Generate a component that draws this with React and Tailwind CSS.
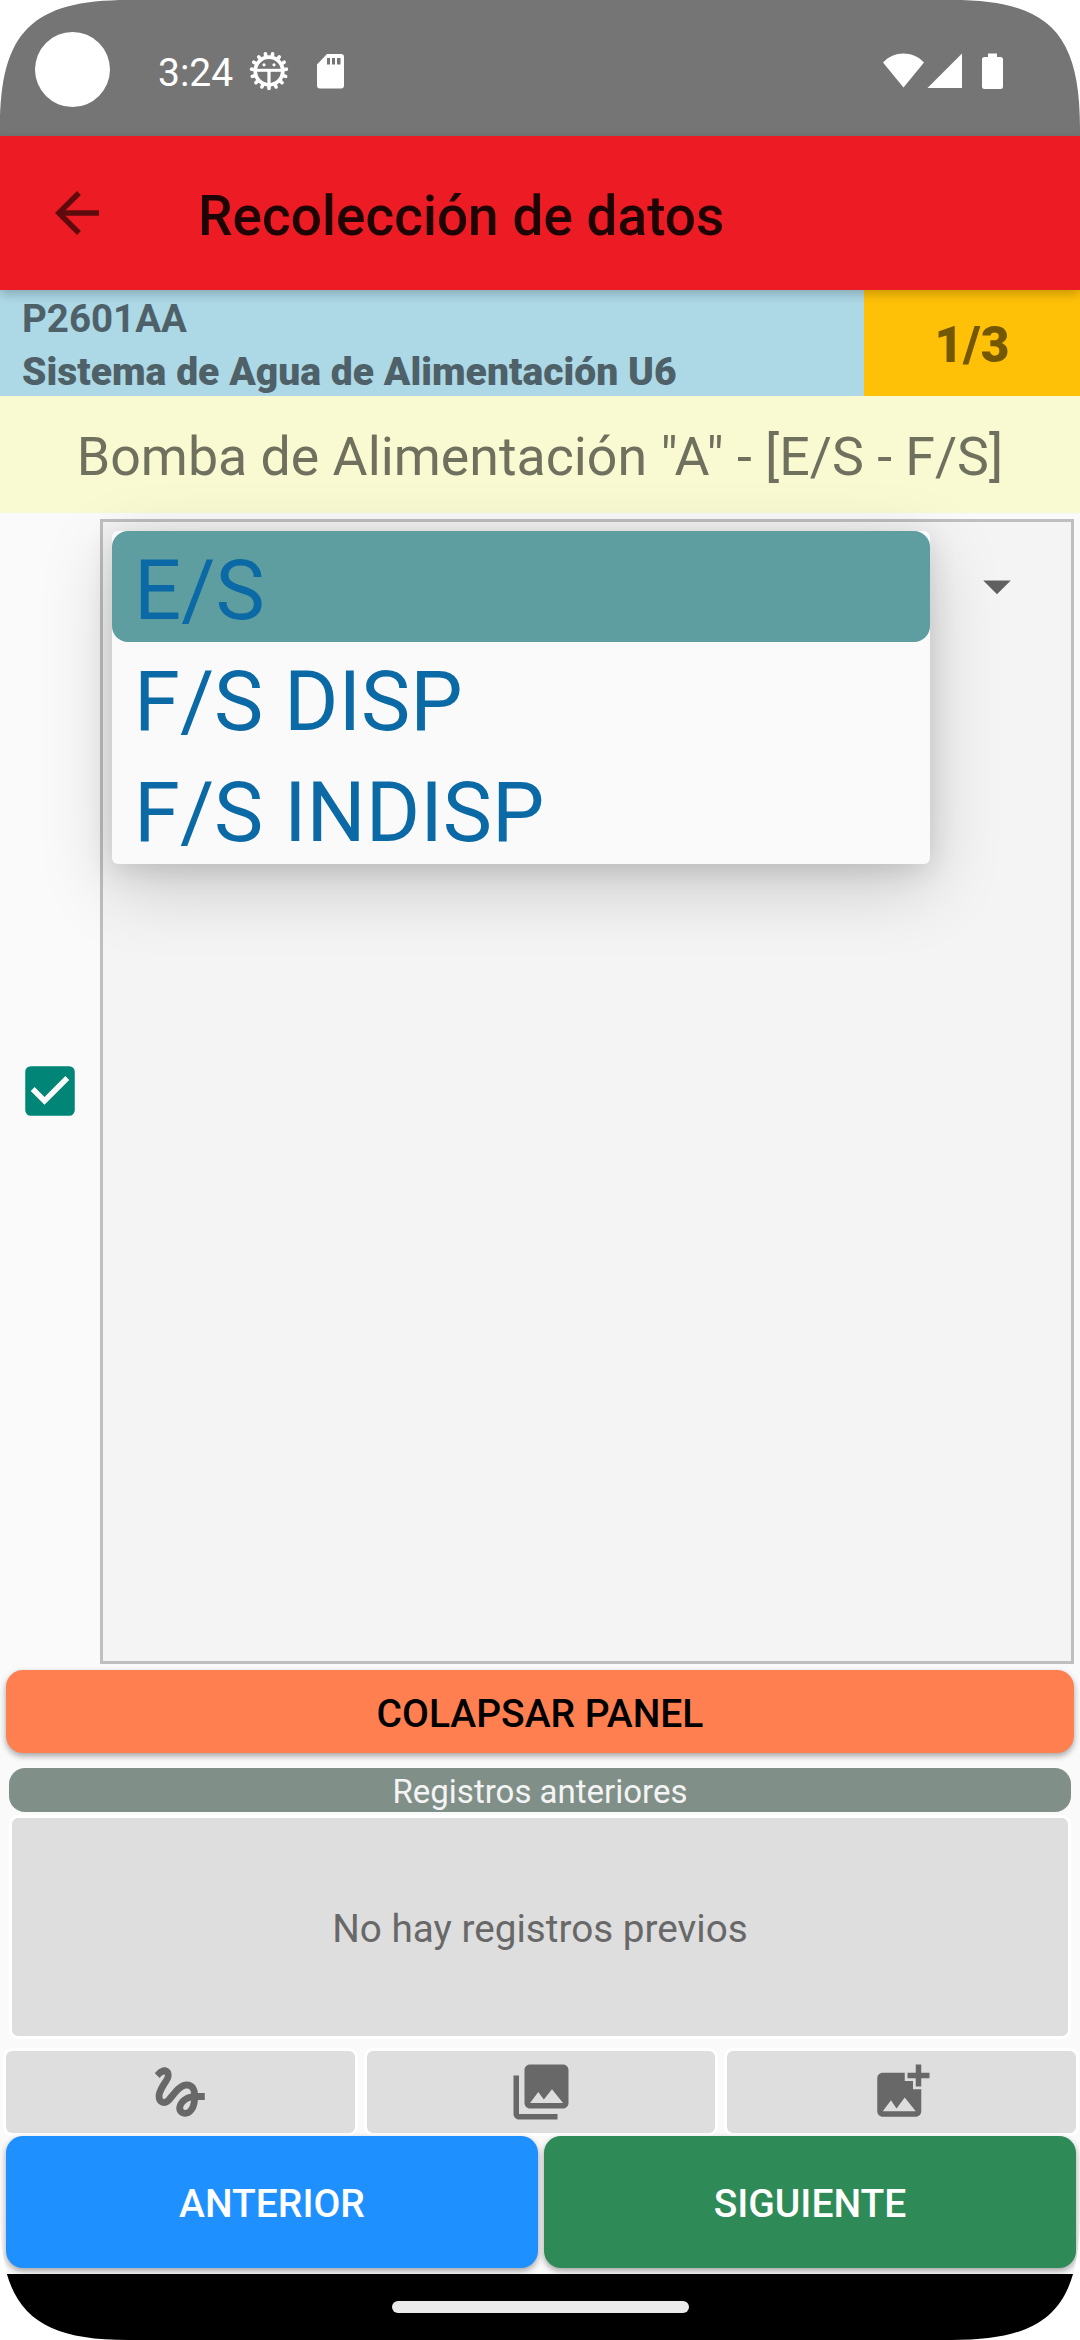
import { MdArrowBack, MdArrowDropDown, MdCheckBox, MdGesture, MdCollections, MdAddPhotoAlternate } from "react-icons/md";

const options = ["E/S", "F/S DISP", "F/S INDISP"];

const teeth = Array.from({ length: 15 }, (_, i) => i * 24 + 12);

function DebugGear() {
  return (
    <svg className="ml-[17px] h-[40px] w-[40px]" viewBox="0 0 40 40" fill="none" stroke="#fff">
      <circle cx="20" cy="20" r="13.8" strokeWidth="3.800" />
      {teeth.map((a) => (
        <line key={a} x1="20" y1="5.500" x2="20" y2="2.500" strokeWidth="3.600" strokeLinecap="round" transform={`rotate(${a} 20 20)`} />
      ))}
      <path d="M7 19.300h26" strokeWidth="3" />
      <path d="M20 19v14" strokeWidth="3.200" />
      <circle cx="15" cy="13.800" r="1.600" fill="#fff" stroke="none" />
      <circle cx="25" cy="13.800" r="1.600" fill="#fff" stroke="none" />
    </svg>
  );
}

function StatusBar() {
  return (
    <div className="flex h-[136px] shrink-0 items-start bg-[#757575] pl-[35px]">
      <div className="mt-[32px] h-[75px] w-[75px] rounded-full bg-white" />
      <span className="mt-[50px] ml-[48px] w-[74px] text-[39px] leading-[46px] whitespace-nowrap text-white">3:24</span>
      <div className="mt-[51px]">
        <DebugGear />
      </div>
      <svg className="mt-[54px] ml-[28px] h-[35px] w-[27px]" viewBox="0 0 27 35">
        <path fillRule="evenodd" fill="#fff" d="M10 0H24a3 3 0 0 1 3 3V31.500a3 3 0 0 1-3 3H3a3 3 0 0 1-3-3V10.500zM10 4v6.500h3V4zm5 0v6.500h3V4zm5 0v6.500h3.500V4z" />
      </svg>
      <svg className="mt-[53px] ml-[539px] h-[36px] w-[121px]" viewBox="0 0 121 36" fill="#fff">
        <path d="M0 9.500C11 -2.500 30 -2.500 41 9.500L20.500 34.500z" />
        <path d="M44.500 35L79 .5V35z" />
        <path d="M105 .5h9V4h3.500a2.500 2.500 0 0 1 2.500 2.500V33.500a2.500 2.500 0 0 1-2.500 2.500h-16a2.500 2.500 0 0 1-2.500-2.500V6.500A2.500 2.500 0 0 1 101.500 4h3.500z" />
      </svg>
    </div>
  );
}

function ToolButton({ children }) {
  return (
    <div className="flex h-[88px] flex-1 items-center justify-center rounded-[9px] border-[3px] border-white bg-[#dedede] text-[66px] text-[#686868]">
      {children}
    </div>
  );
}

function Corner({ className }) {
  return (
    <svg className={className} width="128" height="128" viewBox="0 0 128 128">
      <path d="M0 0V128C0 32 32 0 128 0z" fill="#fff" />
    </svg>
  );
}

export default function App() {
  return (
    <div className="relative flex h-[2340px] w-[1080px] flex-col overflow-hidden bg-[#fafafa] font-['Roboto',sans-serif]">
      <StatusBar />
      <header className="relative z-10 flex h-[154px] shrink-0 items-center bg-[#ed1c24] pl-[44px] shadow-[0_4px_10px_rgba(0,0,0,0.22)]">
        <MdArrowBack className="text-[66px] text-[#5f0b0e]" />
        <h1 className="ml-[88px] pt-[6px] text-[55px] leading-[64px] font-medium text-[#1f0405]">Recolección de datos</h1>
      </header>
      <div className="flex h-[106px] shrink-0">
        <div className="w-[864px] bg-[#add8e6] pt-[2px] pl-[22px] text-[39px] leading-[53px] whitespace-nowrap text-[#4e6168]">
          <p className="text-[38.5px] font-bold">P2601AA</p>
          <p className="pt-px font-black tracking-[0.04px]">Sistema de Agua de Alimentación U6</p>
        </div>
        <div className="flex flex-1 items-center justify-center bg-[#ffc107] pt-[4px] text-[49.5px] font-black text-[#735703]">1/3</div>
      </div>
      <div className="flex h-[117px] shrink-0 items-center justify-center bg-[#f9fad2] pt-[5px] text-[53.7px] whitespace-nowrap text-[#70705f]">
        Bomba de Alimentación "A" - [E/S - F/S]
      </div>
      <main className="flex h-[1157px] shrink-0 py-[6px] pr-[6px]">
        <div className="flex w-[100px] items-center justify-center pb-[2px] text-[66px] text-[#008577]">
          <MdCheckBox />
        </div>
        <div className="relative flex-1 border-[3px] border-[#bfbfbf] bg-[#f4f4f4]">
          <div className="flex justify-end pt-[31px] pr-[41px] text-[66px] text-[#616161]">
            <MdArrowDropDown />
          </div>
          <ul className="absolute top-[9px] left-[9px] w-[818px] rounded-[6px] bg-[#fafafa] text-[83px] text-[#0b6aa5] shadow-[0_22px_72px_rgba(0,0,0,0.18),0_6px_28px_rgba(0,0,0,0.11)]">
            {options.map((o, i) => (
              <li key={o} className={i === 0 ? "flex h-[111px] items-center rounded-[16px] bg-[#5f9ea0] pt-[10px] pl-[22px]" : "flex h-[111px] items-center pt-[10px] pl-[22px]"}>
                {o}
              </li>
            ))}
          </ul>
        </div>
      </main>
      <button className="mx-[6px] h-[83px] shrink-0 rounded-[17px] bg-[#ff7f50] pt-[5px] text-[39px] font-medium text-black shadow-[0_3px_6px_rgba(0,0,0,0.35)]">COLAPSAR PANEL</button>
      <h2 className="mx-[9px] mt-[15px] h-[44px] shrink-0 rounded-[16px] bg-[#809088] pt-[3px] text-center text-[33px] leading-[42px] text-[#f4f4f4]">Registros anteriores</h2>
      <div className="mx-[9px] mt-[3px] flex h-[224px] shrink-0 items-center justify-center rounded-[9px] border-[3px] border-white bg-[#dedede] pt-[4px] text-[38.7px] text-[#686868]">
        No hay registros previos
      </div>
      <div className="mt-[9px] flex shrink-0 gap-[6px] pr-px pl-[3px]">
        <ToolButton><MdGesture /></ToolButton>
        <ToolButton><MdCollections /></ToolButton>
        <ToolButton><MdAddPhotoAlternate /></ToolButton>
      </div>
      <div className="flex h-[138px] shrink-0 gap-[6px] pr-[4px] pb-[6px] pl-[6px] text-[39px] font-medium text-white">
        <button className="flex-1 rounded-[17px] bg-[#1e90ff] pt-[4px] shadow-[0_3px_6px_rgba(0,0,0,0.35)]">ANTERIOR</button>
        <button className="flex-1 rounded-[17px] bg-[#2e8b57] pt-[4px] shadow-[0_3px_6px_rgba(0,0,0,0.35)]">SIGUIENTE</button>
      </div>
      <footer className="relative flex h-[66px] shrink-0 items-center justify-center bg-black">
        <div className="h-[12px] w-[297px] rounded-full bg-[#ebebeb]" />
      </footer>
      <Corner className="absolute top-0 left-0 z-20" />
      <Corner className="absolute top-0 right-0 z-20 -scale-x-100" />
      <Corner className="absolute bottom-0 left-0 z-20 -scale-y-100" />
      <Corner className="absolute right-0 bottom-0 z-20 rotate-180" />
    </div>
  );
}
